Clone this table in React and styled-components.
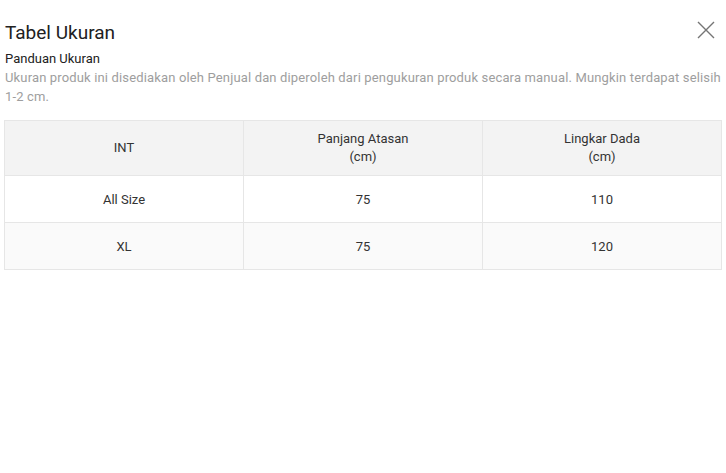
import styled, { createGlobalStyle } from 'styled-components';

const GlobalStyle = createGlobalStyle`
  body {
    margin: 0;
    background: #fff;
    font-family: Roboto, "Liberation Sans", sans-serif;
  }
`;

const Modal = styled.div`
  width: 726px;
  height: 473px;
  box-sizing: border-box;
  padding: 19px 4px 0 4px;
`;

const Header = styled.div`
  display: flex;
  align-items: center;
  justify-content: space-between;
  padding-left: 1px;
`;

const Title = styled.h1`
  margin: 0;
  font-size: 19px;
  font-weight: 400;
  line-height: 28px;
  color: #212121;
`;

const CloseButton = styled.button`
  border: 0;
  background: none;
  padding: 0;
  width: 20px;
  height: 20px;
  margin-right: 6px;
  margin-top: -7px;
  cursor: pointer;
  display: flex;
`;

const Guide = styled.div`
  padding-left: 1px;
  margin-top: 3px;
`;

const Subtitle = styled.p`
  margin: 0;
  font-size: 13px;
  line-height: 18px;
  color: #212121;
`;

const Note = styled.p`
  margin: 0;
  font-size: 13px;
  line-height: 19px;
  letter-spacing: 0.15px;
  color: #9e9e9e;
`;

const NoWrap = styled.span`
  white-space: nowrap;
`;

const Table = styled.table`
  margin-top: 14px;
  width: 718px;
  border-collapse: collapse;
  table-layout: fixed;
  font-size: 13px;
  color: #333;
`;

const HeadCell = styled.th`
  height: 54px;
  background: #f3f3f3;
  border: 1px solid #e6e6e6;
  font-weight: 400;
  line-height: 18px;
  text-align: center;
  padding: 0 8px;
`;

const Row = styled.tr`
  background: ${(p) => (p.$striped ? '#fafafa' : '#fff')};
`;

const Cell = styled.td`
  height: 46px;
  border: 1px solid #e6e6e6;
  text-align: center;
  padding: 0 8px;
`;

const columns = [['INT'], ['Panjang Atasan', '(cm)'], ['Lingkar Dada', '(cm)']];
const rows = [
  ['All Size', '75', '110'],
  ['XL', '75', '120'],
];

const CloseIcon = () => (
  <svg width="20" height="20" viewBox="0 0 20 20">
    <path d="M2 2 L18 18 M18 2 L2 18" stroke="#757575" strokeWidth="1.4" fill="none" />
  </svg>
);

export default function App() {
  return (
    <>
      <GlobalStyle />
      <Modal>
        <Header>
          <Title>Tabel Ukuran</Title>
          <CloseButton aria-label="Tutup">
            <CloseIcon />
          </CloseButton>
        </Header>
        <Guide>
          <Subtitle>Panduan Ukuran</Subtitle>
          <Note>
            Ukuran produk ini disediakan oleh Penjual dan diperoleh dari pengukuran produk secara
            manual. Mungkin terdapat selisih <NoWrap>1-2 cm.</NoWrap>
          </Note>
        </Guide>
        <Table>
          <thead>
            <tr>
              {columns.map((c) => (
                <HeadCell key={c[0]}>
                  {c.map((line, i) => (
                    <div key={i}>{line}</div>
                  ))}
                </HeadCell>
              ))}
            </tr>
          </thead>
          <tbody>
            {rows.map((r, i) => (
              <Row key={r[0]} $striped={i % 2 === 1}>
                {r.map((v, j) => (
                  <Cell key={j}>{v}</Cell>
                ))}
              </Row>
            ))}
          </tbody>
        </Table>
      </Modal>
    </>
  );
}
